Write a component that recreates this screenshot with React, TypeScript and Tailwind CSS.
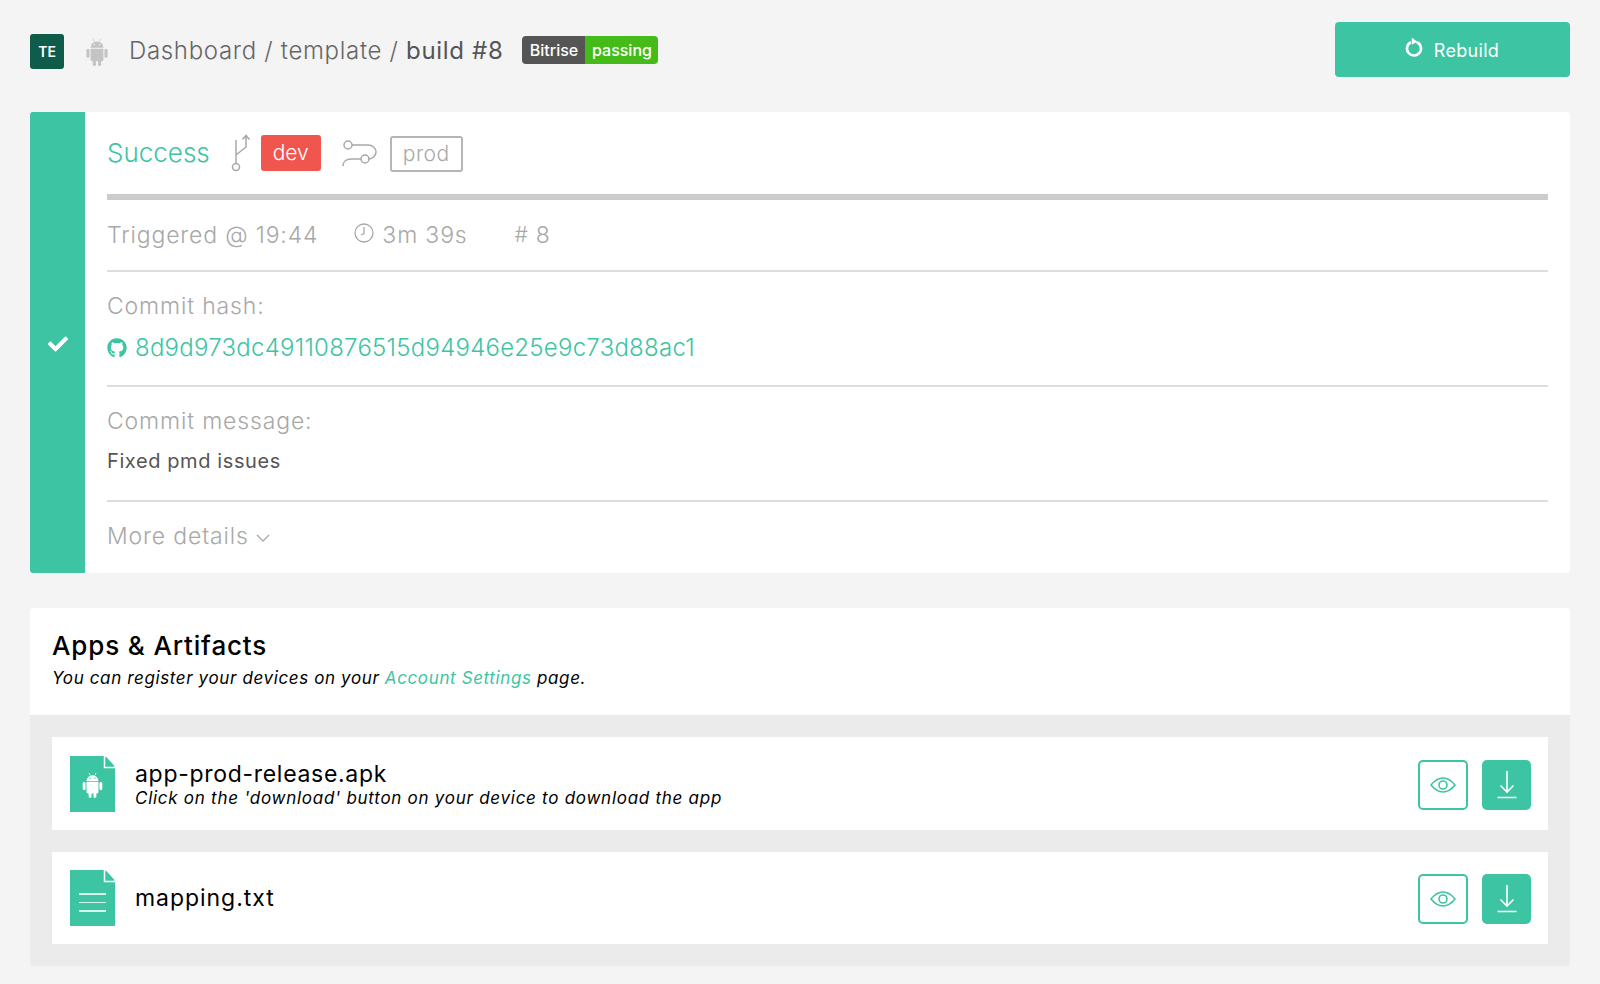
import React from "react";
import { FaGithub, FaCheck } from "react-icons/fa";

const Robot = ({ width, height, color, eye }: { width: number; height: number; color: string; eye: string }) => (
  <svg width={width} height={height} viewBox="0 0 22 27" fill={color}>
    <path d="M4.800 9.500a6.200 6.200 0 0 1 12.400 0Z" />
    <path d="M7.200 1 8.800 3.800M14.800 1 13.200 3.800" stroke={color} strokeWidth="0.700" fill="none" />
    <circle cx="8.500" cy="6.500" r="0.700" fill={eye} />
    <circle cx="13.500" cy="6.500" r="0.700" fill={eye} />
    <path d="M4.800 10.400h12.400v10.400a1.500 1.500 0 0 1-1.500 1.500H6.300a1.500 1.500 0 0 1-1.500-1.500Z" />
    <rect x="0.800" y="10.400" width="3" height="8.600" rx="1.500" />
    <rect x="18.200" y="10.400" width="3" height="8.600" rx="1.500" />
    <rect x="7" y="20" width="3" height="7" rx="1.500" />
    <rect x="12" y="20" width="3" height="7" rx="1.500" />
  </svg>
);
const Eye = () => (
  <svg width="26" height="16" viewBox="0 0 26 16" fill="none" stroke="#3dc4a2" strokeWidth="1.6">
    <path d="M1 8C5 3 9 1 13 1s8 2 12 7c-4 5-8 7-12 7S5 13 1 8Z" />
    <circle cx="13" cy="8" r="4" />
  </svg>
);
const Download = () => (
  <svg width="20" height="28" viewBox="0 0 20 28" fill="none" stroke="#fff" strokeWidth="1.6">
    <path d="M10 0v21M3.500 14.500 10 21l6.500-6.500M0.500 26.500h19" />
  </svg>
);
const Actions = () => (
  <div className="mt-[2px] flex items-center gap-[14px]">
    <button className="flex h-[50px] w-[50px] items-center justify-center rounded-[5px] border-2 border-[#3dc4a2] bg-white"><Eye /></button>
    <button className="flex h-[50px] w-[49px] items-center justify-center rounded-[5px] bg-[#3dc4a2]"><Download /></button>
  </div>
);
const FileShape = ({ children }: { children?: React.ReactNode }) => (
  <div className="relative h-[56px] w-[45px] shrink-0">
    <svg width="45" height="56" viewBox="0 0 45 56" className="absolute inset-0">
      <path d="M0 0h34l11 12v44H0Z" fill="#3dc4a2" />
      <path d="M35.500 0 45 10.500h-9.500Z" fill="#3dc4a2" />
      <path d="M34.500 0v11.500H45" fill="none" stroke="#fff" strokeWidth="1.500" />
    </svg>
    {children}
  </div>
);

export default function App() {
  return (
    <div className="min-h-[984px] bg-[#f4f4f4] px-[30px] pt-[22px] font-['Inter','Liberation_Sans',sans-serif] font-light">
      <header className="mb-[35px] flex h-[55px] items-center">
        <div className="mt-[3px] flex h-[35px] w-[34px] items-center justify-center rounded-[3px] bg-[#0f5c4b] text-[14px] font-semibold text-white">TE</div>
        <div className="mt-[4px] ml-[21px] flex"><Robot width={24} height={28} color="#c4c4c4" eye="#f4f4f4" /></div>
        <div className="mt-[2px] ml-[20px] text-[24px] tracking-[0.68px] text-[#666]">
          Dashboard / template / <span className="font-normal text-[#555]">build #8</span>
        </div>
        <div className="mt-[1px] ml-[19px] flex h-[28px] overflow-hidden rounded-[4px] text-[16px] font-medium text-white">
          <span className="flex w-[63px] items-center justify-center bg-[#555]">Bitrise</span>
          <span className="flex w-[73px] items-center justify-center bg-[#44bb18]">passing</span>
        </div>
        <button className="ml-auto flex h-[55px] w-[235px] items-center justify-center gap-[10px] rounded-[4px] bg-[#3dc4a2] text-[18px] font-normal tracking-[0.3px] text-white">
          <svg width="20" height="20" viewBox="0 0 20 20" fill="none" stroke="#fff" strokeWidth="2.600" className="-mt-[4px] -ml-[2px]">
            <path d="M7 4.200a7 7 0 1 0 5.500-.2" />
            <path d="M8 0 13 3.800 8 6.300Z" fill="#fff" strokeWidth="0.500" />
          </svg>
          <span className="mt-[1px]">Rebuild</span>
        </button>
      </header>

      <section className="flex h-[461px] overflow-hidden rounded-[3px] bg-white">
        <div className="flex w-[55px] shrink-0 items-center justify-center bg-[#3dc4a2] text-white">
          <FaCheck size={20} className="mt-[2px]" />
        </div>
        <div className="mx-[22px] flex min-w-0 flex-1 flex-col">
          <div className="flex h-[88px] shrink-0 items-center border-b-[6px] border-[#ccc]">
            <span className="-mt-[1px] text-[26px] text-[#3dc4a2]">Success</span>
            <svg width="20" height="38" viewBox="0 0 20 38" fill="none" stroke="#a8a8a8" strokeWidth="1.500" className="ml-[20px]">
              <path d="M6 30V6M6 21 16 13V2M12.500 5.500 16 1.500l3.500 4" />
              <circle cx="6" cy="33" r="3.500" />
            </svg>
            <span className="ml-[11px] flex h-[36px] w-[60px] items-center justify-center rounded-[3px] bg-[#f0564e] text-[21px] text-white">dev</span>
            <svg width="36" height="28" viewBox="0 0 36 28" fill="none" stroke="#a8a8a8" strokeWidth="1.500" className="mt-[2px] ml-[21px]">
              <circle cx="6" cy="5" r="4" />
              <circle cx="23" cy="19" r="4" />
              <path d="M10 5h16a8 7 0 0 1 0 14h-0M19 19H9c-5 0-8 3-8 7" />
            </svg>
            <span className="mt-[2px] ml-[12px] flex h-[36px] w-[73px] items-center justify-center rounded-[3px] border-2 border-[#b5b5b5] text-[21px] tracking-[0.5px] text-[#aaa]">prod</span>
          </div>
          <div className="flex h-[72px] shrink-0 items-center border-b-2 border-[#ddd] text-[23px] tracking-[0.85px] text-[#a8a8a8]">
            <span>Triggered @ 19:44</span>
            <svg width="20" height="20" viewBox="0 0 20 20" fill="none" stroke="#a8a8a8" strokeWidth="1.300" className="-mt-[4px] ml-[36px]">
              <circle cx="10" cy="10" r="9" />
              <path d="M10 4v6.500L7 12" />
            </svg>
            <span className="ml-[8px]">3m 39s</span>
            <span className="ml-[47px]"><span className="relative -top-[1px] mr-[7px] text-[21px]">#</span>8</span>
          </div>
          <div className="flex h-[115px] shrink-0 flex-col border-b-2 border-[#ddd] pt-[19px]">
            <div className="text-[23px] leading-[30px] tracking-[0.85px] text-[#a8a8a8]">Commit hash:</div>
            <div className="mt-[12px] flex items-center text-[#3dc4a2]">
              <FaGithub size={20} />
              <span className="ml-[8px] text-[24px] leading-[30px] tracking-[0.25px]">8d9d973dc49110876515d94946e25e9c73d88ac1</span>
            </div>
          </div>
          <div className="flex h-[115px] shrink-0 flex-col border-b-2 border-[#ddd] pt-[19px]">
            <div className="text-[23px] leading-[30px] tracking-[0.85px] text-[#a8a8a8]">Commit message:</div>
            <div className="mt-[11px] text-[20px] leading-[28px] font-normal tracking-[0.6px] text-[#555]">Fixed pmd issues</div>
          </div>
          <div className="flex flex-1 items-center pb-[3px] text-[23px] tracking-[0.85px] text-[#a8a8a8]">
            More details
            <svg width="14" height="8" viewBox="0 0 14 8" fill="none" stroke="#a8a8a8" strokeWidth="1.300" className="mt-[3px] ml-[7px]">
              <path d="M1 1l6 6 6-6" />
            </svg>
          </div>
        </div>
      </section>

      <section className="mt-[35px] overflow-hidden rounded-[3px]">
        <div className="h-[107px] bg-white px-[22px] pt-[22px]">
          <h2 className="text-[26px] leading-[32px] font-medium tracking-[0.85px] text-black">Apps &amp; Artifacts</h2>
          <p className="mt-[4px] text-[17px] leading-[24px] font-normal tracking-[0.62px] text-black italic">
            You can register your devices on your <span className="text-[#3dc4a2]">Account Settings</span> page.
          </p>
        </div>
        <div className="flex h-[251px] flex-col gap-[22px] bg-[#ebebeb] px-[22px] pt-[22px]">
          <div className="flex h-[93px] items-center bg-white pr-[17px] pl-[18px]">
            <FileShape>
              <div className="absolute top-[16px] left-[11px]"><Robot width={23} height={26} color="#fff" eye="#3dc4a2" /></div>
            </FileShape>
            <div className="ml-[20px] flex-1 pt-[2px]">
              <div className="text-[23px] leading-[26px] font-normal tracking-[0.7px] text-black">app-prod-release.apk</div>
              <div className="text-[17px] leading-[22px] font-normal tracking-[0.73px] text-black italic">Click on the 'download' button on your device to download the app</div>
            </div>
            <Actions />
          </div>
          <div className="flex h-[92px] items-center bg-white pr-[17px] pl-[18px]">
            <FileShape>
              <div className="absolute top-[23px] left-[9px] flex w-[27px] flex-col gap-[7px]">
                <div className="h-[1.500px] bg-white/80" /><div className="h-[1.500px] bg-white/80" /><div className="h-[1.500px] bg-white/80" />
              </div>
            </FileShape>
            <div className="ml-[20px] flex-1 text-[23px] font-normal tracking-[0.95px] text-black">mapping.txt</div>
            <Actions />
          </div>
        </div>
      </section>
    </div>
  );
}
